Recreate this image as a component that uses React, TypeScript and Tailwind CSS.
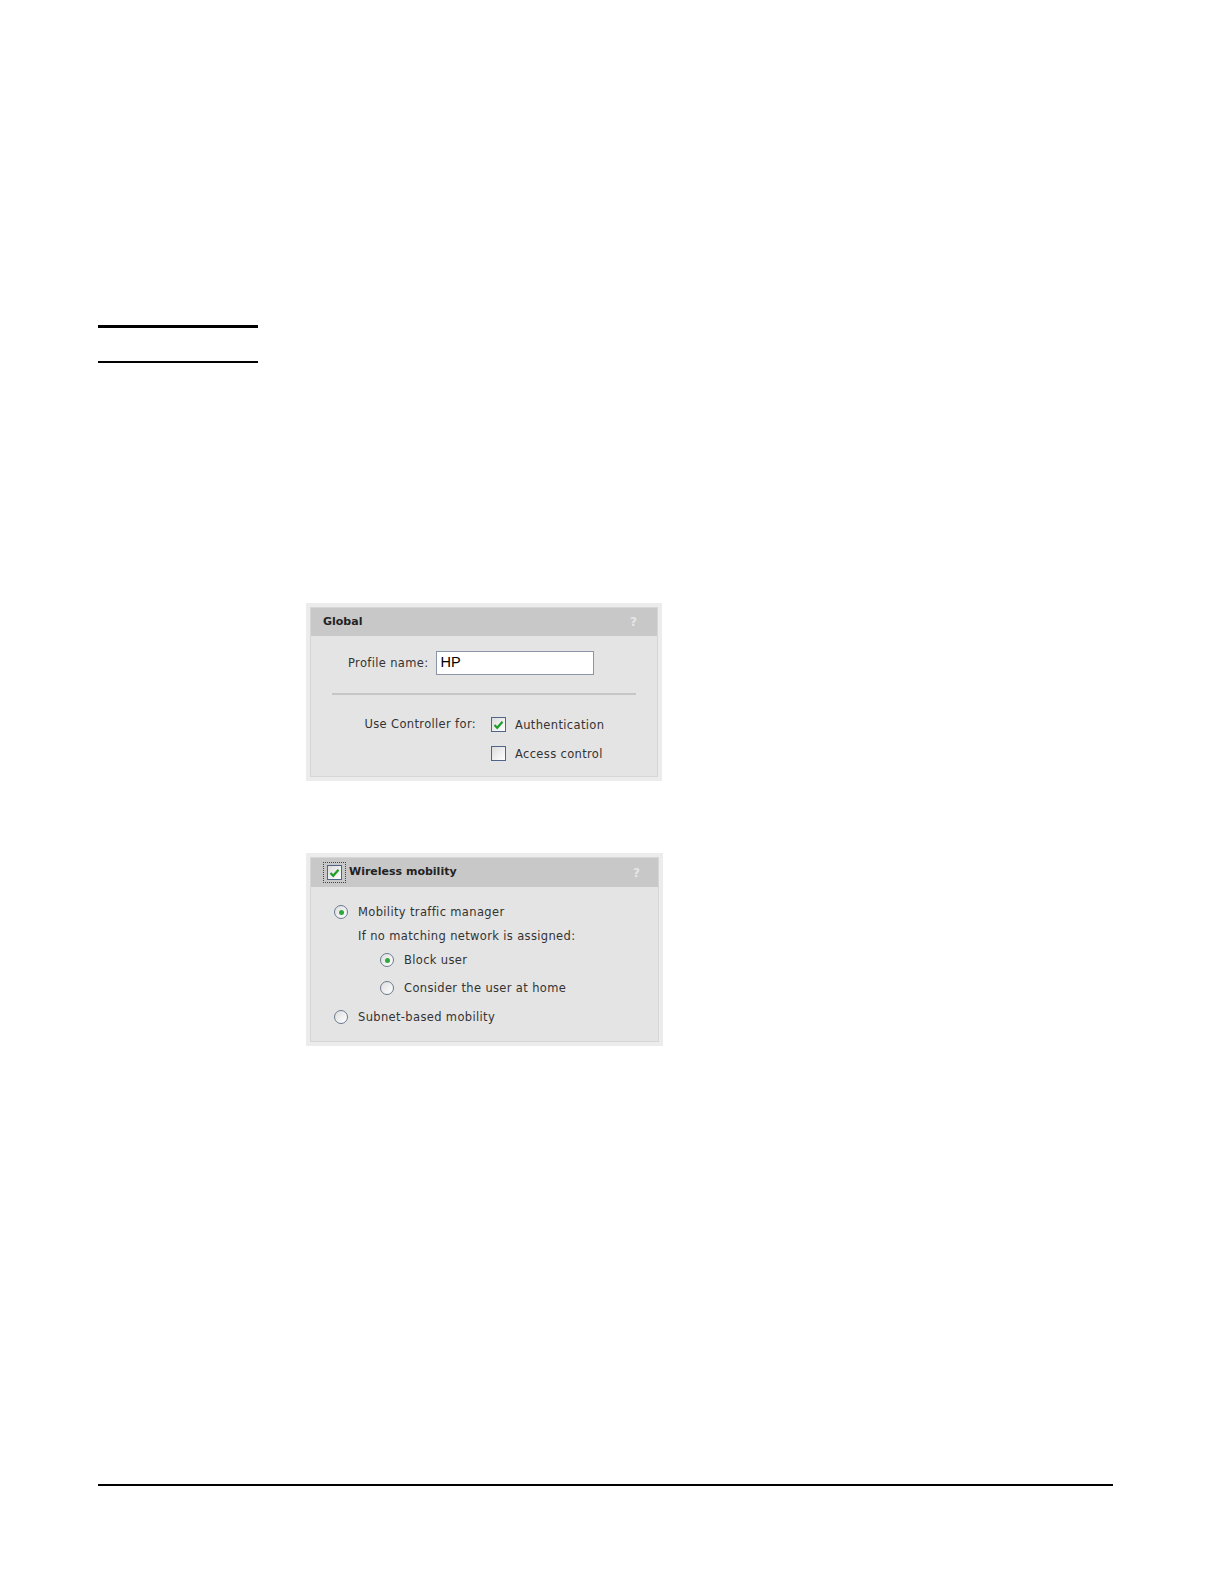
import React from "react";

const font = { fontFamily: '"DejaVu Sans", Verdana, sans-serif' };

function Check({ checked }: { checked: boolean }) {
  return (
    <span className="inline-flex h-[15px] w-[15px] items-center justify-center border border-[#4f6488] bg-gradient-to-br from-[#dcdcdc] to-[#ffffff] shrink-0">
      {checked && (
        <svg width="11" height="10" viewBox="0 0 11 10">
          <path d="M1.5 5 L4.2 7.8 L9.5 1.8" fill="none" stroke="#1f9e2a" strokeWidth="2.2" />
        </svg>
      )}
    </span>
  );
}

function Radio({ checked }: { checked: boolean }) {
  return (
    <span className="inline-flex h-[14px] w-[14px] items-center justify-center rounded-full border border-[#6a7a90] bg-gradient-to-br from-[#dedede] to-[#ffffff] shrink-0">
      {checked && <span className="h-[5px] w-[5px] rounded-full bg-[#2ea83a]" />}
    </span>
  );
}

function Panel({ header, children }: { header: React.ReactNode; children: React.ReactNode }) {
  return (
    <div className="bg-[#ececec] p-[4px]">
      <div className="border border-[#d6d6d6] bg-[#e4e4e4]">{header}{children}</div>
    </div>
  );
}

const lbl = "text-[11.5px] tracking-[0.35px] leading-[14px]";

export default function App() {
  return (
    <div className="relative h-[1584px] w-[1224px] bg-white text-[11px] text-[#333]" style={font}>
      <div className="pt-[325px] pl-[98px]">
        <div className="h-[3px] w-[160px] bg-black" />
        <div className="mt-[33px] h-[2px] w-[160px] bg-black" />
      </div>

      <div className="mt-[240px] ml-[306px] w-[356px]">
        <Panel
          header={
            <div className="flex h-[28px] items-center justify-between bg-[#c8c8c8] pl-[12px] pr-[20px]">
              <span className="font-bold text-[#222]">Global</span>
              <span className="font-bold text-[12px] text-[#e6e6e6]">?</span>
            </div>
          }
        >
          <div className="h-[140px]">
            <div className="flex items-center pt-[15px] pl-[37px]">
              <span className={lbl}>Profile name:</span>
              <div className="ml-[8px] flex h-[24px] w-[158px] items-center border border-[#8a96a8] bg-white pl-[3px] text-[14.5px] text-black" style={{ fontFamily: '"Liberation Sans", Arial, sans-serif' }}>
                HP
              </div>
            </div>
            <div className="mx-[21px] mt-[18px] h-[2px] bg-[#c6c6c6]" />
            <div className="mt-[22px] grid grid-cols-[165px_auto] gap-y-[14px] items-center">
              <span className={`text-right h-[15px] leading-[15px] ${lbl}`}>Use Controller for:</span>
              <div className="flex h-[15px] items-center pl-[15px]">
                <Check checked />
                <span className={`ml-[9px] ${lbl}`}>Authentication</span>
              </div>
              <span />
              <div className="flex h-[15px] items-center pl-[15px]">
                <Check checked={false} />
                <span className={`ml-[9px] ${lbl}`}>Access control</span>
              </div>
            </div>
          </div>
        </Panel>
      </div>

      <div className="mt-[72px] ml-[306px] w-[357px]">
        <Panel
          header={
            <div className="flex h-[29px] items-center justify-between bg-[#c8c8c8] pl-[12px] pr-[18px]">
              <div className="flex items-center">
                <span className="flex h-[21px] w-[23px] items-center justify-center border border-dotted border-[#444]">
                  <Check checked />
                </span>
                <span className="ml-[3px] font-bold text-[#222]">Wireless mobility</span>
              </div>
              <span className="font-bold text-[12px] text-[#e6e6e6]">?</span>
            </div>
          }
        >
          <div className="h-[154px] pl-[23px] pt-[18px]">
            <div className="flex h-[14px] items-center">
              <Radio checked />
              <span className={`ml-[10px] ${lbl}`}>Mobility traffic manager</span>
            </div>
            <div className={`mt-[10px] h-[14px] pl-[24px] ${lbl}`}>If no matching network is assigned:</div>
            <div className="mt-[10px] flex h-[14px] items-center pl-[46px]">
              <Radio checked />
              <span className={`ml-[10px] ${lbl}`}>Block user</span>
            </div>
            <div className="mt-[14px] flex h-[14px] items-center pl-[46px]">
              <Radio checked={false} />
              <span className={`ml-[10px] ${lbl}`}>Consider the user at home</span>
            </div>
            <div className="mt-[15px] flex h-[14px] items-center">
              <Radio checked={false} />
              <span className={`ml-[10px] ${lbl}`}>Subnet-based mobility</span>
            </div>
          </div>
        </Panel>
      </div>

      <div className="mt-[438px] ml-[98px] h-[2px] w-[1015px] bg-black" />
    </div>
  );
}
